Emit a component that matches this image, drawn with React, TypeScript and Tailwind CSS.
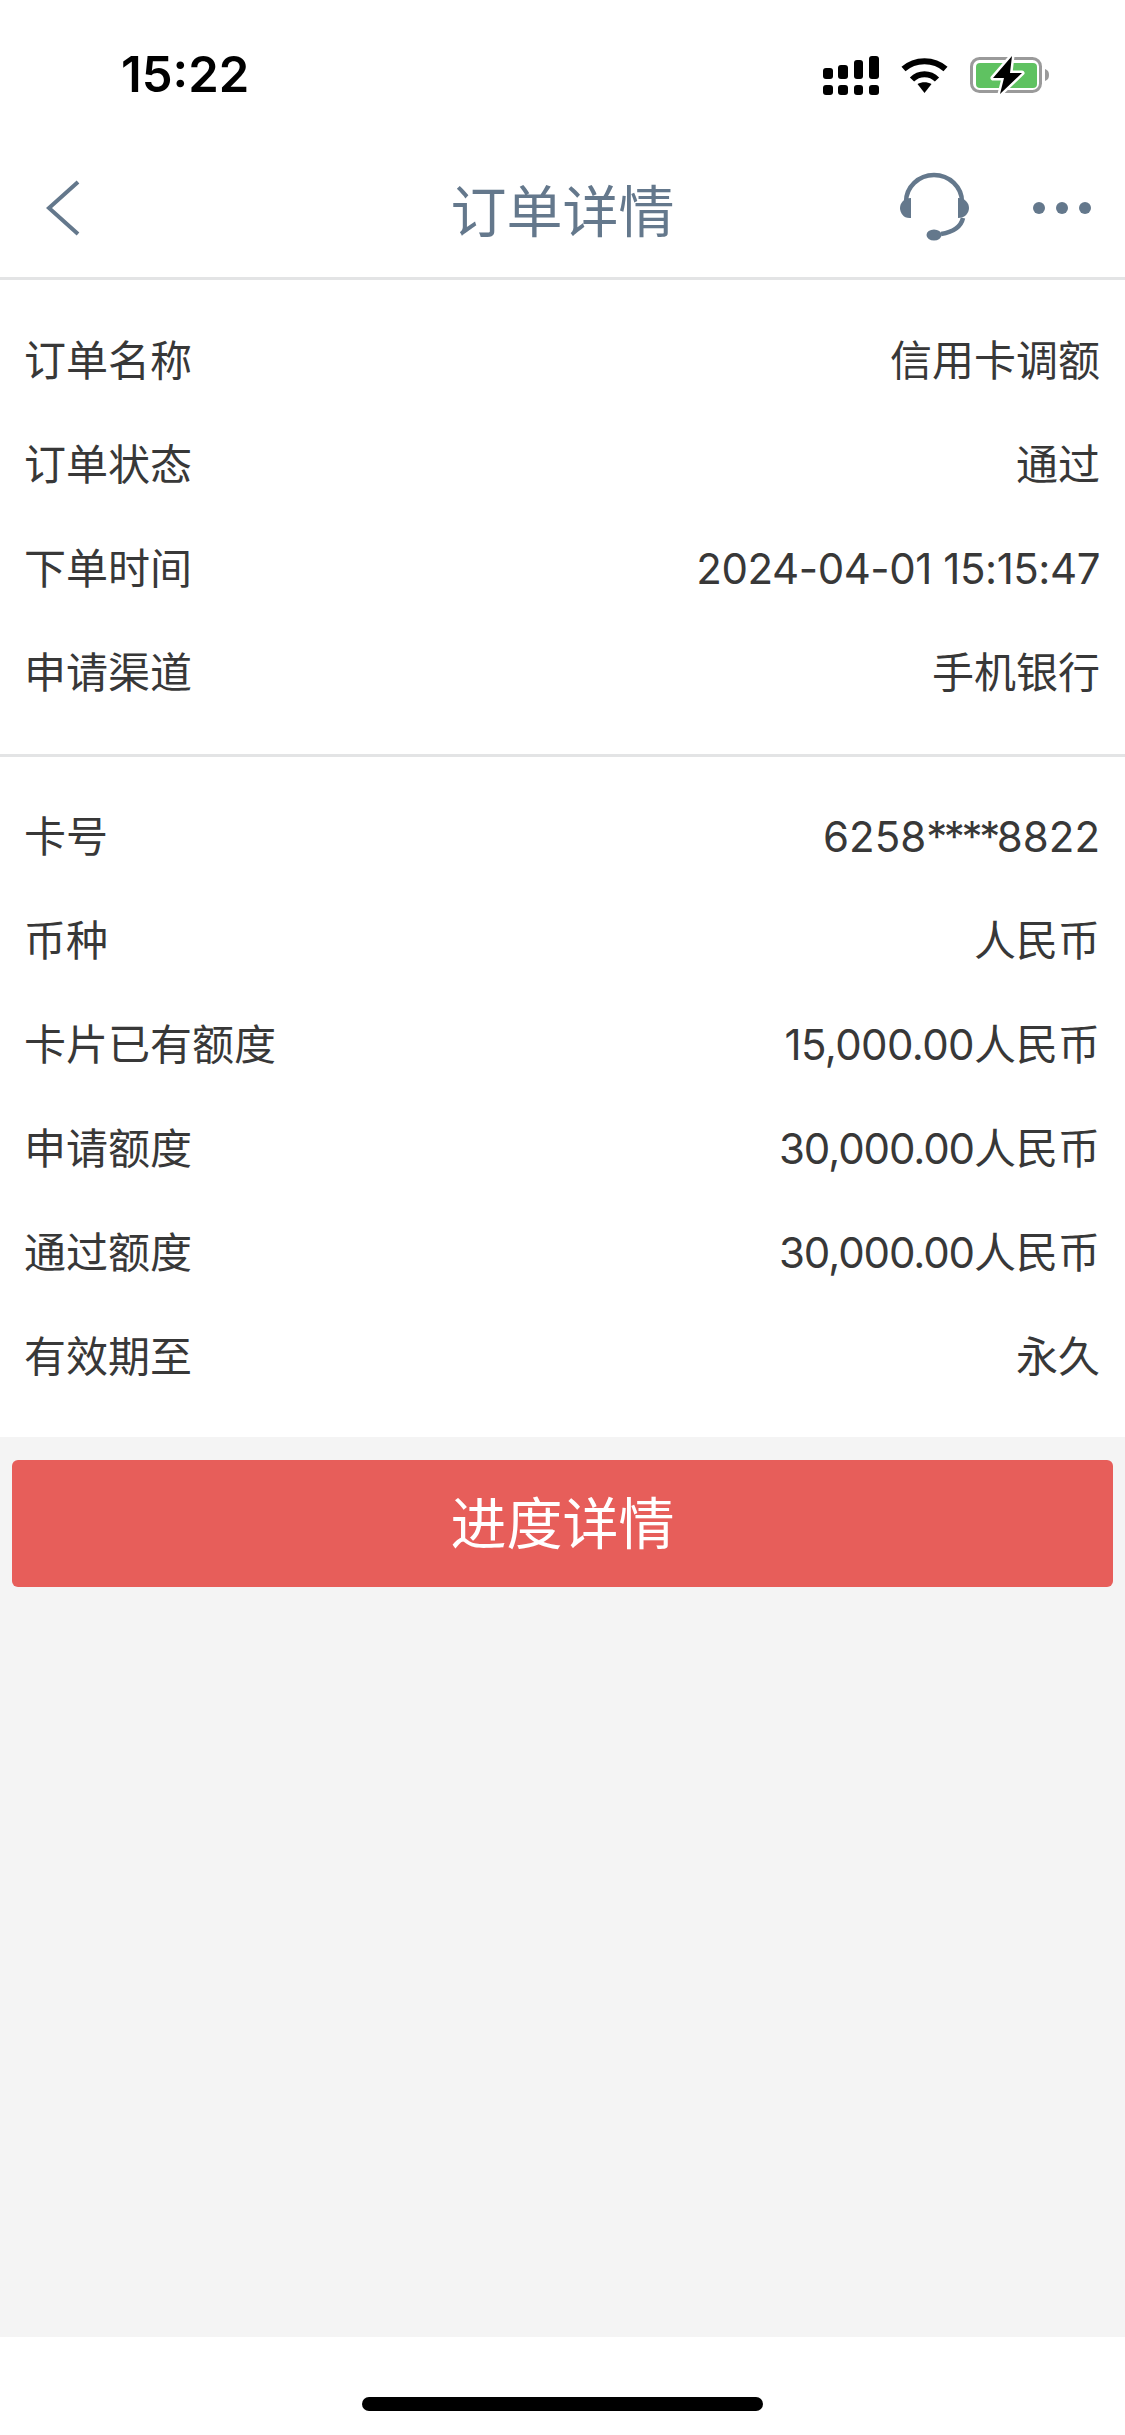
import type { ReactNode } from "react";

const font = { fontFamily: '"Inter", "Noto Sans CJK SC", sans-serif' };

const group1: [string, ReactNode][] = [
  ["订单名称", "信用卡调额"],
  ["订单状态", "通过"],
  ["下单时间", <span className="tracking-[-0.45px]">2024-04-01 15:15:47</span>],
  ["申请渠道", "手机银行"],
];
const group2: [string, ReactNode][] = [
  ["卡号", <span>6258<span className="tracking-[-3.4px]">****</span>8822</span>],
  ["币种", "人民币"],
  ["卡片已有额度", <span><span className="tracking-[-0.6px]">15,000.00</span>人民币</span>],
  ["申请额度", <span><span className="tracking-[-1.1px]">30,000.00</span>人民币</span>],
  ["通过额度", <span><span className="tracking-[-1.1px]">30,000.00</span>人民币</span>],
  ["有效期至", "永久"],
];

function Row({ label, value }: { label: string; value: ReactNode }) {
  return (
    <div className="flex h-[104px] items-center justify-between pl-[24px] pr-[25px] text-[42px] text-[#383838]">
      <span>{label}</span>
      <span>{value}</span>
    </div>
  );
}

function Signal() {
  return (
    <svg width="56" height="39" viewBox="0 0 56 39" fill="#000">
      <rect x="0" y="12" width="10" height="11" rx="3" />
      <rect x="15" y="9" width="10" height="14" rx="3" />
      <rect x="31" y="4" width="9" height="19" rx="3" />
      <rect x="46" y="0" width="10" height="23" rx="3" />
      <rect x="0" y="29" width="10" height="10" rx="3" />
      <rect x="15" y="29" width="10" height="10" rx="3" />
      <rect x="31" y="29" width="9" height="10" rx="3" />
      <rect x="46" y="29" width="10" height="10" rx="3" />
    </svg>
  );
}

function Wifi() {
  return (
    <svg width="47" height="35" viewBox="0 0 47 35" fill="none" stroke="#000" strokeWidth="6">
      <path d="M2.5 11 C14 0.5 33 0.5 44.5 11" />
      <path d="M11 21.5 C18 14.5 29 14.5 36 21.5" />
      <path d="M16.5 26 L23.5 35 L30.5 26 C26 23.5 21 23.5 16.5 26 Z" fill="#000" stroke="none" />
    </svg>
  );
}

function Battery() {
  return (
    <svg width="80" height="40" viewBox="0 0 80 40">
      <rect x="1.5" y="3.5" width="69" height="33" rx="8" fill="none" stroke="#9a9a9a" strokeWidth="3" />
      <rect x="6" y="8" width="61" height="25" rx="4" fill="#5fc261" />
      <path d="M75 14 C78 15 79 17 79 20 C79 23 78 25 75 26 Z" fill="#9a9a9a" />
      <path d="M42 1 L23 23 L34 23 L30 39 L52 18 L40 18 Z" fill="#000" stroke="#fff" strokeWidth="5" paintOrder="stroke" strokeLinejoin="round" />
    </svg>
  );
}

function Headset() {
  return (
    <svg width="70" height="70" viewBox="0 0 70 70" fill="none" stroke="#64788c">
      <path d="M7 30 A28 27 0 0 1 63 30" strokeWidth="4.5" />
      <path d="M64 46 C62 55 54 60 42 62" strokeWidth="4.5" />
      <path d="M12 26 V46 C5 47 1 41 1 36 C1 31 5 26 12 26 Z" fill="#64788c" stroke="none" />
      <path d="M59 26 V46 C66 46 70 41 70 36 C70 31 66 26 59 26 Z" fill="#64788c" stroke="none" />
      <ellipse cx="35" cy="63" rx="7.5" ry="5.5" fill="#64788c" stroke="none" />
    </svg>
  );
}

export default function App() {
  return (
    <div className="flex h-[2435px] w-[1125px] flex-col bg-[#f4f4f4]" style={font}>
      <header className="h-[280px] border-b-[3px] border-[#e3e4e5] bg-white">
        <div className="flex h-[150px] items-center justify-between pl-[121px] pr-[75px]">
          <span className="text-[49px] font-semibold text-black">15:22</span>
          <div className="flex items-center gap-[22px]">
            <Signal />
            <Wifi />
            <Battery />
          </div>
        </div>
        <div className="relative flex h-[127px] items-center justify-center pb-[3px]">
          <svg className="absolute left-[46px] top-[30px]" width="36" height="58" viewBox="0 0 36 58" fill="none" stroke="#64788c" strokeWidth="4">
            <path d="M32 2 L3 28 L32 54" />
          </svg>
          <span className="text-[56px] text-[#64788c]">订单详情</span>
          <div className="absolute left-[899px] top-[22px]">
            <Headset />
          </div>
          <div className="absolute left-[1033px] top-[52px] flex gap-[11px]">
            <span className="h-[12px] w-[12px] rounded-full bg-[#64788c]" />
            <span className="h-[12px] w-[12px] rounded-full bg-[#64788c]" />
            <span className="h-[12px] w-[12px] rounded-full bg-[#64788c]" />
          </div>
        </div>
      </header>
      <section className="border-b-[3px] border-[#e3e4e5] bg-white pb-[30px] pt-[28px]">
        {group1.map(([l, v]) => (
          <Row key={l} label={l} value={v} />
        ))}
      </section>
      <section className="bg-white pb-[29px] pt-[27px]">
        {group2.map(([l, v]) => (
          <Row key={l} label={l} value={v} />
        ))}
      </section>
      <div className="px-[12px] pt-[23px]">
        <button className="flex h-[127px] w-full items-center justify-center rounded-[6px] bg-[#e75e5a] text-[56px] text-white">
          进度详情
        </button>
      </div>
      <div className="flex-1" />
      <footer className="flex h-[98px] items-start justify-center bg-white pt-[60px]">
        <div className="h-[14px] w-[401px] rounded-full bg-black" />
      </footer>
    </div>
  );
}
